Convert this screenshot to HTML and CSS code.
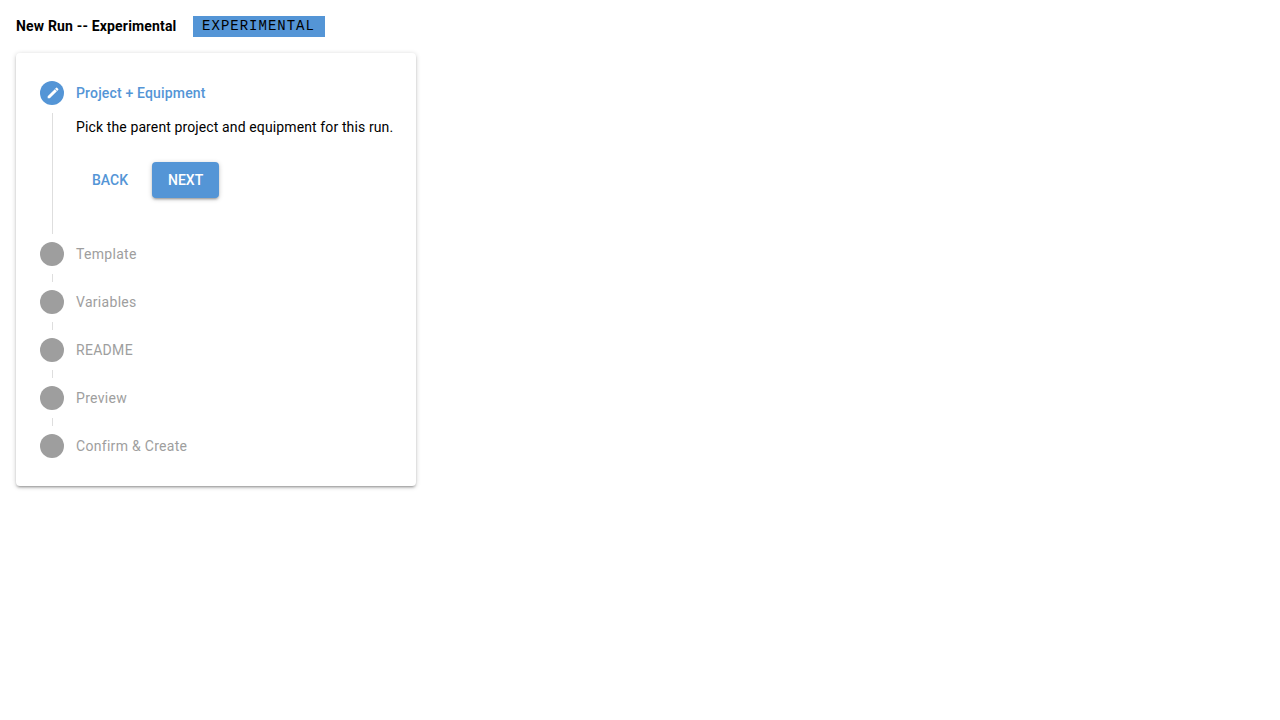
FILE: index.html
```html
<!DOCTYPE html>
<html>
	<head>
		<meta charset="UTF-8">
		<title>New Run -- Experimental</title>
		<link rel="stylesheet" href="styles.css">
	</head>
	<body>
		<div class="page">
			<div class="run-header">
				<h1 class="run-title">New Run -- Experimental</h1>
				<span class="run-chip">EXPERIMENTAL</span>
			</div>
			<div class="stepper-card">
				<div class="step step-active">
					<span class="step-icon">
						<svg viewBox="0 0 24 24"><path fill="#fff" d="M6.5 17.5v-2.4L14.6 7l2.4 2.4-8.1 8.1zM17.35 9.05l-2.4-2.4 1.25-1.25a.7.7 0 0 1 1 0l1.4 1.4a.7.7 0 0 1 0 1z"/></svg>
					</span>
					<span class="step-label">Project + Equipment</span>
				</div>
				<div class="step-content">
					<p class="step-text">Pick the parent project and equipment for this run.</p>
					<div class="step-actions">
						<button class="btn btn-text">BACK</button>
						<button class="btn btn-primary">NEXT</button>
					</div>
				</div>
				<div class="step">
					<span class="step-icon"></span>
					<span class="step-label">Template</span>
				</div>
				<div class="step-line"></div>
				<div class="step">
					<span class="step-icon"></span>
					<span class="step-label">Variables</span>
				</div>
				<div class="step-line"></div>
				<div class="step">
					<span class="step-icon"></span>
					<span class="step-label">README</span>
				</div>
				<div class="step-line"></div>
				<div class="step">
					<span class="step-icon"></span>
					<span class="step-label">Preview</span>
				</div>
				<div class="step-line"></div>
				<div class="step">
					<span class="step-icon"></span>
					<span class="step-label">Confirm &amp; Create</span>
				</div>
			</div>
		</div>
	</body>
</html>
```

FILE: styles.css
```css
*{
	margin:0;
	padding:0;
	box-sizing:border-box;
}
body{
	background:#fff;
	color:#000;
	font-family:Roboto,"Liberation Sans",sans-serif;
	font-size:14px;
}
.page{
	min-height:720px;
	padding:16px;
}
.run-header{
	display:flex;
	align-items:center;
	gap:16px;
	height:21px;
}
.run-title{
	font-size:14px;
	font-weight:700;
	line-height:21px;
	letter-spacing:.17px;
}
.run-chip{
	height:21px;
	padding:0 9.6px;
	background:#5495d6;
	color:#000;
	font-family:"Liberation Mono",monospace;
	font-size:14px;
	line-height:21px;
	letter-spacing:1px;
}
.stepper-card{
	width:400px;
	height:433px;
	margin-top:16px;
	padding:28px 24px;
	background:#fff;
	border-radius:4px;
	box-shadow:0 1px 5px 0 rgba(0,0,0,.2),0 2px 2px 0 rgba(0,0,0,.14),0 3px 1px -2px rgba(0,0,0,.12);
}
.step{
	display:flex;
	align-items:center;
	gap:12px;
	height:24px;
}
.step-icon{
	display:flex;
	align-items:center;
	justify-content:center;
	width:24px;
	height:24px;
	border-radius:50%;
	background:#9e9e9e;
}
.step-label{
	color:#9e9e9e;
	letter-spacing:.3px;
}
.step-active .step-icon{
	background:#5495d6;
}
.step-active .step-icon svg{
	display:block;
	width:21px;
	height:21px;
}
.step-active .step-label{
	color:#5495d6;
	font-weight:500;
	letter-spacing:.17px;
}
.step-line{
	width:1px;
	height:8px;
	margin:8px 0 8px 12px;
	background:#dedede;
}
.step-content{
	height:121px;
	margin:8px 0 8px 12px;
	padding:4px 0 0 23px;
	border-left:1px solid #dedede;
}
.step-text{
	line-height:20px;
	white-space:nowrap;
	letter-spacing:.12px;
}
.step-actions{
	display:flex;
	gap:8px;
	margin-top:25px;
}
.btn{
	height:36px;
	padding:0 16px;
	border:0;
	border-radius:4px;
	background:none;
	font-family:Roboto,"Liberation Sans",sans-serif;
	font-size:14px;
	font-weight:500;
}
.btn-text{
	color:#5495d6;
}
.btn-primary{
	background:#5495d6;
	color:#fff;
	box-shadow:0 1px 5px 0 rgba(0,0,0,.2),0 2px 2px 0 rgba(0,0,0,.14),0 3px 1px -2px rgba(0,0,0,.12);
}
```
